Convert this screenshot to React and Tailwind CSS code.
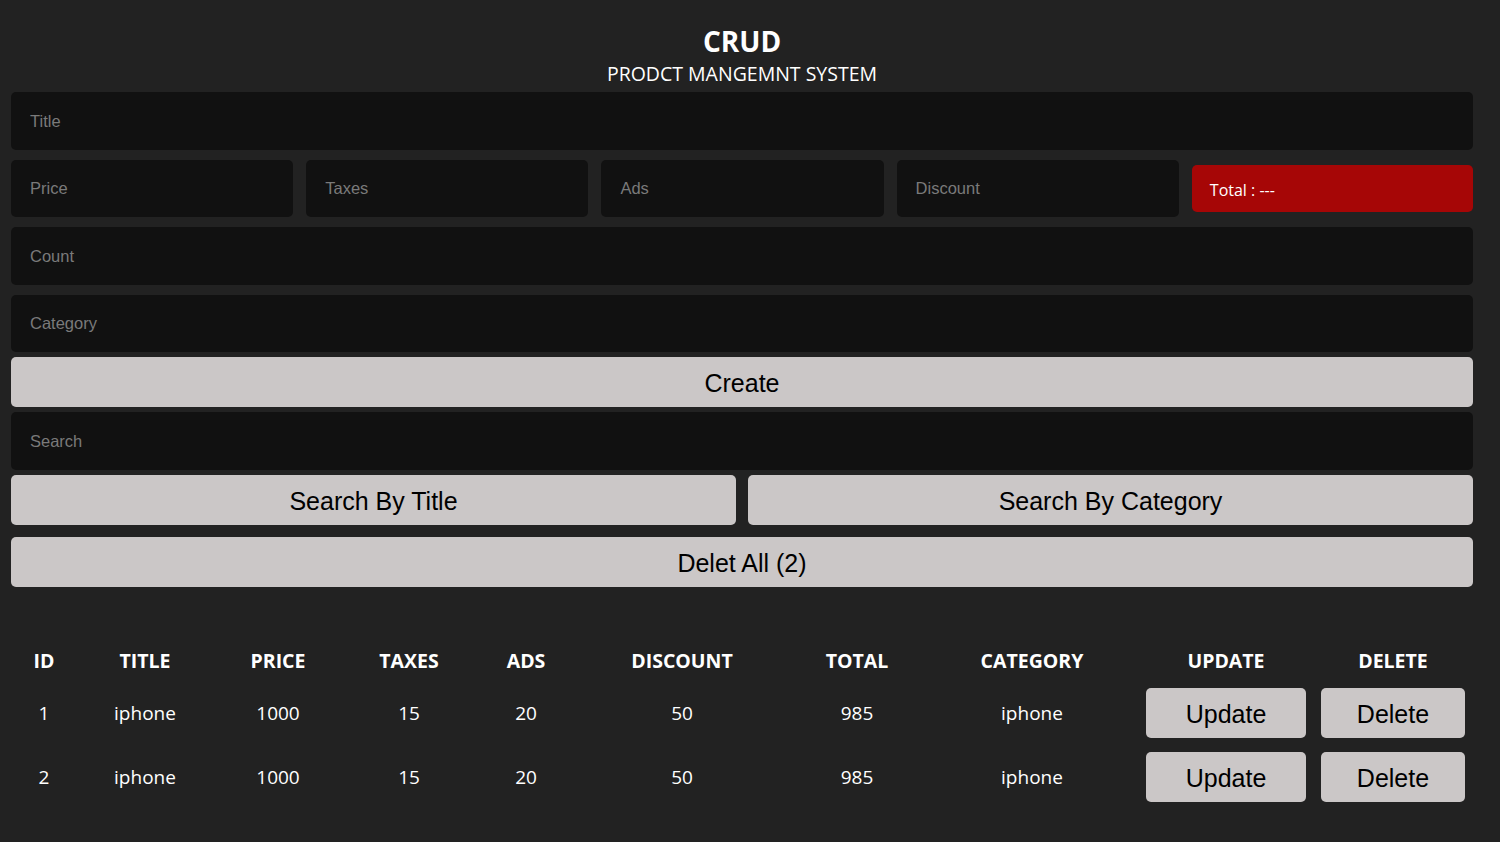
import React from 'react';

const SEGOE = { fontFamily: '"Open Sans", "Noto Sans", sans-serif' };

const inputCls =
  'w-full bg-[#111111] rounded-[5px] pl-[19px] text-[16.5px] text-white placeholder:text-[#7a7a7a] outline-none font-["Liberation_Sans",Arial,sans-serif]';
const btnCls =
  'h-[50px] pt-[3px] bg-[#cbc7c7] rounded-[5px] text-[25px] text-black font-["Liberation_Sans",Arial,sans-serif]';

const products = [
  { id: 1, title: 'iphone', price: 1000, taxes: 15, ads: 20, discount: 50, total: 985, category: 'iphone' },
  { id: 2, title: 'iphone', price: 1000, taxes: 15, ads: 20, discount: 50, total: 985, category: 'iphone' },
];

const cols = [
  ['ID', 'w-[66px]'],
  ['TITLE', 'w-[136px]'],
  ['PRICE', 'w-[130px]'],
  ['TAXES', 'w-[132px]'],
  ['ADS', 'w-[102px]'],
  ['DISCOUNT', 'w-[210px]'],
  ['TOTAL', 'w-[140px]'],
  ['CATEGORY', 'w-[210px]'],
  ['UPDATE', 'w-[178px]'],
  ['DELETE', 'w-[156px]'],
];

export default function App() {
  return (
    <div className="min-h-screen bg-[#222222] text-white pl-[11px] pr-[27px]">
      {/* header */}
      <div className="flex flex-col items-center pt-[22px] pb-[4px]" style={SEGOE}>
        <h1 className="text-[28px] font-bold leading-[38px]">CRUD</h1>
        <p className="text-[19.5px] leading-[28px]">PRODCT MANGEMNT SYSTEM</p>
      </div>

      {/* inputs */}
      <div className="flex flex-col">
        <input className={inputCls + ' h-[58px]'} placeholder="Title" />
        <div className="flex items-center gap-[13px] mt-[10px]">
          <input className={inputCls + ' h-[57px] flex-1 min-w-0'} placeholder="Price" />
          <input className={inputCls + ' h-[57px] flex-1 min-w-0'} placeholder="Taxes" />
          <input className={inputCls + ' h-[57px] flex-1 min-w-0'} placeholder="Ads" />
          <input className={inputCls + ' h-[57px] flex-1 min-w-0'} placeholder="Discount" />
          <div className="flex-1 min-w-0 h-[47px] bg-[#a60606] rounded-[5px] pl-[18px] flex items-center text-[16px] pt-[2px]" style={SEGOE}>
            Total : ---
          </div>
        </div>
        <input className={inputCls + ' h-[58px] mt-[10px]'} placeholder="Count" />
        <input className={inputCls + ' h-[57px] mt-[10px]'} placeholder="Category" />
        <button className={btnCls + ' mt-[5px]'}>Create</button>
        <input className={inputCls + ' h-[58px] mt-[5px]'} placeholder="Search" />
        <div className="flex gap-[12px] mt-[5px]">
          <button className={btnCls + ' flex-1'}>Search By Title</button>
          <button className={btnCls + ' flex-1'}>Search By Category</button>
        </div>
        <button className={btnCls + ' mt-[12px]'}>Delet All (2)</button>
      </div>

      {/* table */}
      <table className="table-fixed mt-[54px] border-collapse" style={SEGOE}>
        <thead>
          <tr className="h-[40px]">
            {cols.map(([c, w]) => (
              <th key={c} className={`${w} text-[19.5px] font-bold text-center`}>{c}</th>
            ))}
          </tr>
        </thead>
        <tbody>
          {products.map(p => (
            <tr key={p.id} className="h-[64px] text-[19px] text-center">
              <td>{p.id}</td>
              <td>{p.title}</td>
              <td>{p.price}</td>
              <td>{p.taxes}</td>
              <td>{p.ads}</td>
              <td>{p.discount}</td>
              <td>{p.total}</td>
              <td>{p.category}</td>
              <td>
                <button className={btnCls + ' w-[160px]'}>Update</button>
              </td>
              <td>
                <button className={btnCls + ' w-[144px]'}>Delete</button>
              </td>
            </tr>
          ))}
        </tbody>
      </table>
    </div>
  );
}
